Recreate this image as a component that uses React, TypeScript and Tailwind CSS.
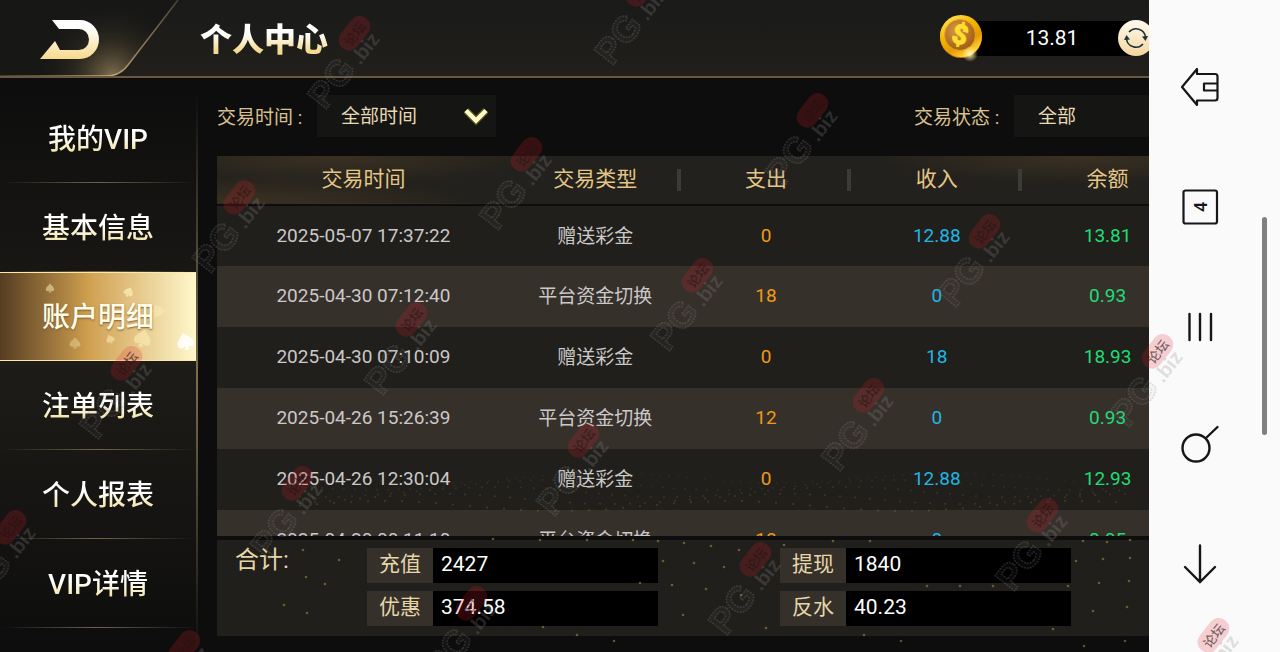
import { useState } from 'react';

interface Transaction {
  time: string;
  type: string;
  expense: string;
  income: string;
  balance: string;
}

const menuItems = ['我的VIP', '基本信息', '账户明细', '注单列表', '个人报表', 'VIP详情'];

const transactions: Transaction[] = [
  { time: '2025-05-07 17:37:22', type: '赠送彩金', expense: '0', income: '12.88', balance: '13.81' },
  { time: '2025-04-30 07:12:40', type: '平台资金切换', expense: '18', income: '0', balance: '0.93' },
  { time: '2025-04-30 07:10:09', type: '赠送彩金', expense: '0', income: '18', balance: '18.93' },
  { time: '2025-04-26 15:26:39', type: '平台资金切换', expense: '12', income: '0', balance: '0.93' },
  { time: '2025-04-26 12:30:04', type: '赠送彩金', expense: '0', income: '12.88', balance: '12.93' },
  { time: '2025-04-20 00:11:10', type: '平台资金切换', expense: '18', income: '0', balance: '0.05' },
];

const columns = ['交易时间', '交易类型', '支出', '收入', '余额'];

const totals = [
  { label: '充值', value: '2427' },
  { label: '提现', value: '1840' },
  { label: '优惠', value: '374.58' },
  { label: '反水', value: '40.23' },
];

// Gold dust scattered behind the totals
const dust = [
  [663, 561], [672, 585], [640, 583], [614, 641], [577, 635], [543, 627], [303, 550], [339, 560],
  [306, 577], [284, 605], [307, 613], [325, 584], [684, 543], [711, 546], [739, 550], [694, 563],
  [724, 567], [706, 589], [741, 595], [683, 615], [784, 545], [870, 541], [833, 541], [901, 641],
  [864, 635], [766, 628], [1076, 561], [1103, 559], [1130, 558], [1129, 581], [1099, 583],
  [1093, 611], [1127, 607], [1053, 629], [1084, 646], [1125, 641], [1130, 540], [1107, 542],
  [1083, 541], [960, 586], [993, 586], [1068, 586], [927, 586], [658, 541], [633, 540], [587, 540],
  [540, 540], [493, 539],
];

const waves = [0, 1, 2, 3, 4].flatMap((row) =>
  Array.from({ length: Math.floor(840 / (9 + row * 2)) }, (_, i) => {
    const x = 300 + i * (9 + row * 2);
    return { x, y: 478 + row * 7 + Math.sin(x / 55 + row) * 5, o: 0.08 + row * 0.04 };
  }),
);

const stamps = [
  [354, 33], [641, -11], [239, 197], [526, 154], [812, 110], [411, 319], [697, 275], [984, 231],
  [126, 363], [868, 395], [1157, 351], [10, 527], [297, 483], [583, 440], [1042, 515], [755, 559],
  [471, 603], [184, 647], [1213, 635], [1328, 471],
];

const Watermark = () => (
  <svg className="pointer-events-none absolute inset-0 z-20 h-full w-full" aria-hidden="true">
    {stamps.map(([x, y]) => (
      <g key={`${x},${y}`} transform={`translate(${x} ${y}) rotate(-52)`}>
        <text x="-79" y="25" fontSize="36" fontWeight="700" fontFamily="Liberation Sans, sans-serif" fill="#8a8a8a" fillOpacity="0.06" stroke="#8a8a8a" strokeOpacity="0.28" strokeWidth="1.5" strokeDasharray="2 1">PG</text>
        <rect x="-19" y="-10" width="38" height="21" rx="10" fill="#e01f2b" fillOpacity="0.2" />
        <text x="-13" y="6" fontSize="13" fontWeight="500" fontFamily="Noto Sans CJK SC, sans-serif" fill="#241212" fillOpacity="0.6">论坛</text>
        <text x="-22" y="25" fontSize="20" fontWeight="700" fontFamily="Liberation Sans, sans-serif" fill="#8a8a8a" fillOpacity="0.26">.biz</text>
      </g>
    ))}
  </svg>
);

const GoldDust = () => (
  <svg className="pointer-events-none absolute inset-0 z-10 h-full w-full" aria-hidden="true">
    {dust.map(([x, y]) => (
      <circle key={`${x}-${y}`} cx={x} cy={y} r="1.3" fill="#c09540" opacity="0.5" />
    ))}
    {waves.map(({ x, y, o }, i) => (
      <circle key={i} cx={x} cy={y} r="1" fill="#c09540" opacity={o} />
    ))}
  </svg>
);

const Coin = () => (
  <svg viewBox="0 0 44 48" className="z-10 h-12 w-11 shrink-0" aria-hidden="true">
    <defs>
      <linearGradient id="coinRim" x1="0" y1="0" x2="0.6" y2="1">
        <stop offset="0" stopColor="#fff06a" />
        <stop offset="0.45" stopColor="#f7b500" />
        <stop offset="0.75" stopColor="#e39a00" />
        <stop offset="1" stopColor="#ffd83c" />
      </linearGradient>
      <radialGradient id="coinFace" cx="0.4" cy="0.35" r="0.8">
        <stop offset="0" stopColor="#d99a48" />
        <stop offset="1" stopColor="#94500c" />
      </radialGradient>
      <radialGradient id="coinFlare">
        <stop offset="0" stopColor="#fffbd0" />
        <stop offset="1" stopColor="#ffe27a" stopOpacity="0" />
      </radialGradient>
    </defs>
    <circle cx="21" cy="23" r="21" fill="#c87800" />
    <circle cx="21" cy="22" r="21" fill="url(#coinRim)" />
    <circle cx="20" cy="21" r="15.5" fill="url(#coinFace)" stroke="#e8a51d" />
    <text x="20" y="30" textAnchor="middle" fontSize="27" fontWeight="900" fontFamily="Roboto, sans-serif" fill="#ffdf2b" stroke="#ffdf2b" strokeWidth="0.8" transform="rotate(14 20 21)">$</text>
    <circle cx="30" cy="40" r="8" fill="url(#coinFlare)" />
  </svg>
);

const spade = 'M0-6C2-3 6-1 6 2.500C6 5 3 6 1 4L2 7H-2L-1 4C-3 6-6 5-6 2.500C-6-1-2-3 0-6Z';

const ActiveBackdrop = () => (
  <svg viewBox="0 0 196 89" preserveAspectRatio="none" className="absolute inset-0 h-full w-full" aria-hidden="true">
    <g fill="#fff3bd">
      <path d={spade} transform="translate(50 15) scale(.7)" opacity="0.5" />
      <path d={spade} transform="translate(129 19) rotate(25) scale(.8)" opacity="0.65" />
      <path d={spade} transform="translate(159 39) rotate(90)" opacity="0.4" />
      <path d={spade} transform="translate(75 71) scale(.9)" opacity="0.35" />
      <path d={spade} transform="translate(110 67) rotate(-20) scale(.7)" opacity="0.5" />
      <path d={spade} transform="translate(143 66) rotate(15) scale(1.4)" opacity="0.5" />
      <path d={spade} transform="translate(185 69) rotate(-15) scale(1.4)" fill="#ffffff" opacity="0.85" />
    </g>
  </svg>
);

const Header = () => (
  <header className="flex h-[78px] shrink-0 items-center overflow-hidden border-b-2 border-[#6b573f] bg-linear-to-b from-[#1a1a19] to-[#201f1b]">
    <button aria-label="返回" className="shrink-0 self-start">
      <svg viewBox="0 0 180 78" className="h-[78px] w-[180px]">
        <defs>
          <radialGradient id="tabGlow" cx="112" cy="76" r="75" gradientUnits="userSpaceOnUse">
            <stop offset="0" stopColor="#a08c62" stopOpacity="0.75" />
            <stop offset="0.5" stopColor="#5b4d35" stopOpacity="0.3" />
            <stop offset="1" stopColor="#1a1a19" stopOpacity="0" />
          </radialGradient>
          <linearGradient id="tabEdge" x1="0" y1="0" x2="1" y2="0">
            <stop offset="0" stopColor="#4f4534" />
            <stop offset="0.6" stopColor="#c9b07c" />
            <stop offset="1" stopColor="#4c4233" />
          </linearGradient>
          <linearGradient id="backFill" x1="0" y1="0" x2="0" y2="1">
            <stop offset="0.2" stopColor="#ffffff" />
            <stop offset="1" stopColor="#f8d98c" />
          </linearGradient>
        </defs>
        <path d="M178 0L128 65Q120 76 106 76H0V0Z" fill="#171716" />
        <path d="M178 0L128 65Q120 76 106 76H0V0Z" fill="url(#tabGlow)" />
        <path d="M178 0L128 65Q120 76 106 76H0" fill="none" stroke="url(#tabEdge)" strokeWidth="1.5" />
        <path d="M52 20H80A19 19.500 0 0 1 80 59H40L55 41L60 50H79A10 10.500 0 0 0 79 29H59Z" fill="url(#backFill)" />
      </svg>
    </button>
    <h1 className="ml-5 bg-linear-to-b from-white from-40% to-[#f5d98f] to-80% bg-clip-text pt-1 text-[32px] leading-10 font-black text-transparent">
      个人中心
    </h1>
    <div className="-mr-[5px] ml-auto flex items-center">
      <Coin />
      <output className="-ml-6 h-[35px] w-44 bg-black pl-2 text-center text-[21px] leading-[35px] text-white">13.81</output>
      <button aria-label="刷新" className="-ml-[18px] flex size-9 items-center justify-center rounded-full bg-linear-to-b from-[#fffaf0] to-[#f3d69c]">
        <svg viewBox="0 0 24 24" className="size-6" fill="none" stroke="#1c3038" strokeWidth="1.6">
          <path d="M5 6A9.500 9.500 0 0 1 21.500 11" />
          <path d="M19 18A9.500 9.500 0 0 1 2.500 13" />
          <path d="M18 10.500L21.500 15L24 10Z" fill="#1c3038" stroke="none" />
          <path d="M0 14L2.500 9L6 13.500Z" fill="#1c3038" stroke="none" />
        </svg>
      </button>
    </div>
  </header>
);

const SideMenu = ({ active, onSelect }: { active: string; onSelect: (item: string) => void }) => (
  <nav className="flex w-[198px] shrink-0 bg-linear-to-b from-[#0d0d0d] via-[#1e1c18] to-[#0d0d0d] pt-4">
    <ul className="flex-1">
      {menuItems.map((item) => {
        const isActive = item === active;
        return (
          <li key={item}>
            <button
              onClick={() => onSelect(item)}
              className={`relative flex h-[89px] w-full items-center justify-center pt-0.5 text-[28px] font-medium ${
                isActive
                  ? 'border-y border-[#ffe9a6] bg-linear-to-r from-[#563d22] via-[#cf9f4f] via-45% to-[#fff8cc]'
                  : ''
              }`}
            >
              {isActive && <ActiveBackdrop />}
              {isActive ? (
                <span className="relative text-[#fffbe8] [text-shadow:0_1px_2px_#7a5a2a]">{item}</span>
              ) : (
                <span className="bg-linear-to-b from-white from-40% to-[#f1e3a0] to-80% bg-clip-text text-transparent">{item}</span>
              )}
            </button>
            {!isActive && <div className="-mt-px h-px bg-linear-to-r from-transparent via-[#6f6446] to-transparent" />}
          </li>
        );
      })}
    </ul>
    <div className="w-0.5 bg-linear-to-b from-transparent via-[#7d6d4c] to-transparent" />
  </nav>
);

const Filters = () => (
  <div className="flex h-[42px] items-center justify-between text-[19px]">
    <div className="flex items-center">
      <label htmlFor="time" className="w-[100px] pt-1 text-[#d8c090]">交易时间 :</label>
      <div className="relative">
        <select id="time" className="h-[42px] w-[179px] appearance-none bg-[#151514] pt-0.5 pl-6 text-[#e6d9b4] outline-none">
          <option>全部时间</option>
        </select>
        <svg viewBox="0 0 28 22" className="pointer-events-none absolute top-2.5 right-1.5 h-[22px] w-7" fill="none" strokeLinejoin="miter">
          <path d="M4 5.500L14 15.500L24 5.500" stroke="#8f8f20" strokeOpacity="0.55" strokeWidth="7" />
          <path d="M4 5.500L14 15.500L24 5.500" stroke="#fdf8c6" strokeWidth="4.500" />
        </svg>
      </div>
    </div>
    <div className="flex items-center">
      <label htmlFor="status" className="w-[100px] pt-1 text-[#d8c090]">交易状态 :</label>
      <select id="status" className="h-[42px] w-[179px] appearance-none bg-[#151514] pt-0.5 pl-6 text-[#e6d9b4] outline-none">
        <option>全部</option>
      </select>
    </div>
  </div>
);

const TransactionTable = () => (
  <div className="mt-[19px] min-h-0 flex-1 overflow-x-hidden overflow-y-auto [scrollbar-width:none]">
    <table className="w-full table-fixed text-center text-[19px]">
      <colgroup>
        <col className="w-[30%]" />
        <col />
        <col />
        <col />
        <col />
      </colgroup>
      <thead>
        <tr className="h-[49px] border-b-2 border-[#0d0d0b] bg-[#23211d] bg-[radial-gradient(ellipse_20%_60%_at_12%_0%,#3b3122,transparent),radial-gradient(ellipse_20%_60%_at_88%_0%,#3b3122,transparent),radial-gradient(ellipse_22%_60%_at_4%_100%,#3b3122,transparent)] text-[21px] text-[#e3c687]">
          {columns.map((column, i) => (
            <th key={column} className="p-0 font-normal">
              <div className="flex items-center">
                <span className={`h-[22px] w-1 -translate-x-full ${i > 1 ? 'bg-[#3d3b38]' : ''}`} />
                <span className="flex-1 pr-1">{column}</span>
              </div>
            </th>
          ))}
        </tr>
      </thead>
      <tbody>
        {transactions.map((row) => (
          <tr key={row.time} className="h-[61px] bg-[#201f1b] even:bg-[#36302b]">
            <td className="text-[#cbc8c8]">{row.time}</td>
            <td className="pt-0.5 text-[#cbc8c8]">{row.type}</td>
            <td className="text-[#ef9a17]">{row.expense}</td>
            <td className="text-[#1fb6e4]">{row.income}</td>
            <td className="text-[#1fdc75]">{row.balance}</td>
          </tr>
        ))}
      </tbody>
    </table>
  </div>
);

const Totals = () => (
  <section className="mt-1 flex bg-[#201f1b] pt-2 pb-2.5 pl-[18px] text-[21px]">
    <h2 className="w-[132px] shrink-0 text-[24px] leading-6 text-[#e5d6a8]">合计:</h2>
    <dl className="grid grid-cols-[413px_413px] gap-y-2">
      {totals.map(({ label, value }) => (
        <div key={label} className="flex h-[35px] w-[291px] leading-[33px]">
          <dt className="w-[66px] bg-[#36302b] text-center text-[#e5d6a8]">{label}</dt>
          <dd className="flex-1 bg-black pl-2 text-white">{value}</dd>
        </div>
      ))}
    </dl>
  </section>
);

const SystemBar = () => (
  <aside className="flex w-[131px] shrink-0 bg-[#fafafa] text-[#161616]">
    <div className="w-[102px] pt-[27px]">
      <button aria-label="主页" className="flex h-[120px] w-full items-center justify-center">
        <svg viewBox="0 0 40 40" className="size-10" fill="none" stroke="currentColor" strokeWidth="2.200" strokeLinejoin="round">
          <path d="M2 20L17 2V7H35Q37.500 7 37.500 9.500V31Q37.500 33.500 35 33.500H17V38Z" />
          <path d="M37 16.500H24V23.500H37" />
        </svg>
      </button>
      <button aria-label="标签页" className="flex h-[120px] w-full items-center justify-center">
        <svg viewBox="0 0 40 40" className="size-10" fill="none" stroke="currentColor" strokeWidth="2.200">
          <rect x="3.500" y="3.500" width="33.500" height="33" rx="2" />
          <text transform="translate(27 20) rotate(-90)" textAnchor="middle" fontSize="18" fontWeight="500" fontFamily="Roboto, sans-serif" fill="currentColor" stroke="none">4</text>
        </svg>
      </button>
      <button aria-label="最近任务" className="flex h-[120px] w-full items-center justify-center">
        <svg viewBox="0 0 40 40" className="size-10" fill="none" stroke="currentColor" strokeWidth="2.400" strokeLinecap="round">
          <path d="M9.500 7V33M20 7V33M31 7V33" />
        </svg>
      </button>
      <button aria-label="搜索" className="flex h-[120px] w-full items-center justify-center">
        <svg viewBox="0 0 40 40" className="size-10 overflow-visible" fill="none" stroke="currentColor" strokeWidth="2.400" strokeLinecap="round">
          <circle cx="16" cy="21" r="13.500" />
          <path d="M26 11L37.500 0" />
        </svg>
      </button>
      <button aria-label="下载" className="flex h-[113px] w-full items-center justify-center">
        <svg viewBox="0 0 40 40" className="size-10" fill="none" stroke="currentColor" strokeWidth="2.400" strokeLinecap="round">
          <path d="M20 1.500V38M5 23L20 38L35 23" />
        </svg>
      </button>
    </div>
    <div className="mt-[217px] ml-[11px] h-[218px] w-[5px] rounded-full bg-[#808080]" />
  </aside>
);

export default function App() {
  const [active, setActive] = useState('账户明细');

  return (
    <div className="relative flex h-screen overflow-hidden bg-[#0d0d0d] font-['Roboto','Noto_Sans_CJK_SC',sans-serif]">
      <div className="relative flex min-w-0 flex-1 flex-col overflow-hidden">
        <Header />
        <div className="flex min-h-0 flex-1">
          <SideMenu active={active} onSelect={setActive} />
          <main className="min-w-0 flex-1 overflow-hidden pl-[19px]">
            <div className="flex h-full min-w-[976px] flex-col pt-[17px] pb-4">
              <Filters />
              <TransactionTable />
              <Totals />
            </div>
          </main>
        </div>
        <GoldDust />
      </div>
      <SystemBar />
      <Watermark />
    </div>
  );
}
